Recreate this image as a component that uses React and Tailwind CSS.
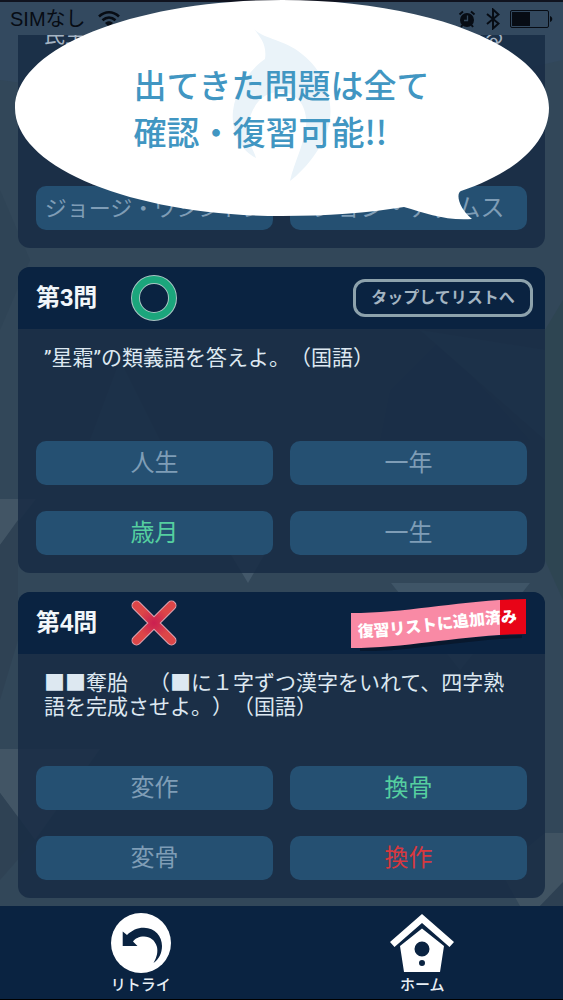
import React from "react";

const questions = [
  {
    id: 3,
    text: "”星霜”の類義語を答えよ。（国語）",
    correct: true,
    added: false,
    answers: [
      { label: "人生" },
      { label: "一年" },
      { label: "歳月", status: "correct" },
      { label: "一生" },
    ],
  },
  {
    id: 4,
    text: "■■奪胎　（■に１字ずつ漢字をいれて、四字熟語を完成させよ。）（国語）",
    correct: false,
    added: true,
    answers: [
      { label: "変作" },
      { label: "換骨", status: "correct" },
      { label: "変骨" },
      { label: "換作", status: "wrong" },
    ],
  },
];

const answerColors = {
  correct: "text-[#55cfa0]",
  wrong: "text-[#d8383f]",
};

const Backdrop = () => (
  <svg
    className="absolute inset-0 h-full w-full"
    viewBox="0 0 563 1000"
    preserveAspectRatio="none"
    aria-hidden="true"
  >
    <path d="M0 0H563V60L300 120L0 80Z" fill="#33495f" />
    <path d="M0 190L30 260L0 330Z" fill="#2f4456" />
    <path d="M545 330L563 300V600L545 560Z" fill="#2e4552" />
    <path d="M0 499H36L0 545Z" fill="#425565" />
    <path d="M0 545L18 520V640L0 700Z" fill="#2f4254" />
    <path d="M225 545H270L248 583Z" fill="#43586a" />
    <path d="M391 583H530L460 670Z" fill="#3f5567" />
    <path d="M0 749H100L35 840L0 793Z" fill="#425565" />
    <path d="M0 793L35 840L0 880Z" fill="#2f4254" />
    <path d="M545 833H563V885L540 906H520L500 870Z" fill="#405362" />
    <path d="M563 882L540 906H563Z" fill="#2d4052" />
    <path d="M120 360L160 440H90Z" fill="#3a5064" />
    <path d="M390 390L440 340L530 440H380Z" fill="#2c4156" />
    <path d="M420 330L545 350V440Z" fill="#3a5064" />
  </svg>
);

const StatusBar = () => (
  <div className="relative flex h-[35px] items-center justify-between border-t-2 border-[#10131f] px-2.5 text-[#070c14]">
    <div className="flex items-center gap-3">
      <span className="text-xl leading-6">SIMなし</span>
      <svg width="22" height="18" viewBox="0 0 22 18" fill="none">
        <path
          d="M1 6.500C7 .8 15 .8 21 6.500M4.500 10.300C8.500 6.600 13.500 6.600 17.500 10.300"
          stroke="currentColor"
          strokeWidth="2.600"
        />
        <path d="M7 13C9.500 10.800 12.500 10.800 15 13L11 17Z" fill="currentColor" />
      </svg>
    </div>
    <div className="flex items-center gap-2.5">
      <svg width="18" height="18" viewBox="0 0 18 18" fill="none">
        <circle cx="9" cy="10" r="7" fill="currentColor" />
        <path
          d="M1.500 4.500L5 1.500M16.500 4.500L13 1.500M4.500 15L3 17M13.500 15L15 17"
          stroke="currentColor"
          strokeWidth="2"
        />
        <path d="M9.500 5.500V10.500H6" stroke="#33485c" strokeWidth="1.300" />
      </svg>
      <svg width="14" height="22" viewBox="0 0 14 22" fill="none">
        <path
          d="M1 6L12.500 15.500L7 20.500V1.500L12.500 6.500L1 16"
          stroke="currentColor"
          strokeWidth="2"
        />
      </svg>
      <svg width="43" height="18" viewBox="0 0 43 18" fill="none">
        <rect x=".5" y=".5" width="38" height="17" rx="1.500" stroke="currentColor" />
        <rect x="2" y="2" width="18" height="14" fill="currentColor" />
        <path d="M40 6C43 7 43 11 40 12Z" fill="currentColor" />
      </svg>
    </div>
  </div>
);

const Answer = ({ label, status, small }) => (
  <button
    type="button"
    className={`h-11 rounded-[10px] bg-[#255072] whitespace-nowrap ${
      small ? "text-[22px]" : "text-2xl"
    } ${answerColors[status] || "text-[#7f9db6]"}`}
  >
    {label}
  </button>
);

const CorrectMark = () => (
  <svg width="46" height="46" viewBox="0 0 46 46" fill="none" role="img" aria-label="正解">
    <circle cx="23" cy="23" r="18.500" stroke="#a9c6c4" strokeWidth="9" />
    <circle cx="23" cy="23" r="18.500" stroke="#1ba67c" strokeWidth="7" />
  </svg>
);

const WrongMark = () => (
  <svg width="46" height="46" viewBox="0 0 46 46" fill="none" role="img" aria-label="不正解">
    <defs>
      <radialGradient id="cross" gradientUnits="userSpaceOnUse" cx="23" cy="23" r="22">
        <stop offset="0" stopColor="#cc1f50" />
        <stop offset="0.300" stopColor="#d02e4e" />
        <stop offset="0.700" stopColor="#dc4648" />
      </radialGradient>
    </defs>
    <path d="M5.500 5.500L40.500 40.500M40.500 5.500L5.500 40.500" stroke="#d9a3b0" strokeWidth="10" strokeLinecap="round" />
    <path d="M5.500 5.500L40.500 40.500M40.500 5.500L5.500 40.500" stroke="url(#cross)" strokeWidth="8" strokeLinecap="round" />
  </svg>
);

const AddedRibbon = () => (
  <svg width="176" height="62" viewBox="0 -6 176 62" className="overflow-visible">
    <defs>
      <clipPath id="ribbon">
        <path d="M1 15C60 15 110 2 176 1V36C110 37 60 50 1 50Z" />
      </clipPath>
      <path id="ribbon-line" d="M8 39C60 38 110 26 174 24" />
    </defs>
    <path d="M10 48C60 48 110 38 172 37V40C110 42 60 54 10 53Z" fill="#07101f" opacity="0.600" />
    <g clipPath="url(#ribbon)">
      <rect width="150" height="51" fill="#f98aa5" />
      <rect x="150" width="26" height="51" fill="#e80417" />
    </g>
    <text className="fill-white text-[16px] font-black">
      <textPath href="#ribbon-line">復習リストに追加済み</textPath>
    </text>
  </svg>
);

const QuestionCard = ({ question }) => (
  <section className="overflow-hidden rounded-xl bg-[#182b44]/85">
    <header className="flex h-[62px] items-center justify-between bg-[#0a2341] pr-3 pl-[18px]">
      <div className="flex items-center gap-[34px]">
        <h2 className="text-2xl font-bold text-[#f1f6fa]">第{question.id}問</h2>
        {question.correct ? <CorrectMark /> : <WrongMark />}
      </div>
      {question.added ? (
        <div className="pr-[7px]">
          <AddedRibbon />
        </div>
      ) : (
        <button
          type="button"
          className="h-[38px] w-[180px] rounded-xl border-[3px] border-[#8da2ac] text-base font-bold text-[#a3b4c1]"
        >
          タップしてリストへ
        </button>
      )}
    </header>
    <p className="min-h-28 px-[26px] pt-[17px] font-['Roboto','Noto_Sans_CJK_JP',sans-serif] text-[21px] leading-6 text-[#dde8f1] [text-spacing-trim:space-all]">
      {question.text}
    </p>
    <div className="grid grid-cols-2 gap-x-[17px] gap-y-[26px] px-[18px] pb-[18px]">
      {question.answers.map((answer) => (
        <Answer key={answer.label} {...answer} />
      ))}
    </div>
  </section>
);

const PreviousCard = () => (
  <section className="flex h-[213px] flex-col justify-end overflow-hidden rounded-b-xl bg-[#182b44]/85">
    <p className="min-h-[163px] px-[26px] text-[21px] leading-6 whitespace-nowrap text-[#a5b4c3]">
      民主共和制のもとで就任した初代大統領とされる
    </p>
    <div className="grid shrink-0 grid-cols-2 gap-x-[17px] px-[18px] pb-[18px]">
      <Answer label="ジョージ・ワシントン" small />
      <Answer label="ジョン・アダムス" />
    </div>
  </section>
);

const SpeechBubble = () => (
  <div className="absolute inset-x-0 top-0">
    <svg className="w-full" viewBox="0 0 563 222" aria-hidden="true">
      <path
        d="M282 0C430 0 549 48 549 108C549 143 515 173 461 191C455 194 460 210 472 219C446 221 425 213 404 207C368 213 326 216 282 216C134 216 15 168 15 108C15 48 134 0 282 0Z"
        fill="#fff"
      />
      <path
        d="M254 29C262 38 281 39 298 51C322 68 333 94 330 119C326 144 307 168 290 181C294 163 303 147 306 127C308 105 296 92 280 92C259 92 251 110 247 127C246 140 254 150 256 158C240 150 231 131 233 111C236 87 251 69 265 59C267 45 261 38 254 29Z"
        fill="#eaf3f9"
      />
    </svg>
    <div className="absolute inset-x-0 top-[61px] flex justify-center">
      <p className="font-['Noto_Sans_CJK_JP',sans-serif] text-[33px] leading-[47px] font-medium text-[#4196c2]">
        出てきた問題は全て
        <br />
        確認・復習可能!!
      </p>
    </div>
  </div>
);

const RetryIcon = () => (
  <svg width="64" height="60" viewBox="-2 0 64 60">
    <circle cx="30" cy="30" r="30" fill="#fff" />
    <path
      d="M11.700 18.500L16 22C21 17 27 14.500 33 14.700C44 15 51 23 51 33C51 40 48 46 42.500 50C46 44 47 39 46 34C44 27 39 23.500 33 23.500C28 23.500 24 25.500 22 28.500L26.500 33H11.700Z"
      fill="#0a2341"
    />
  </svg>
);

const HomeIcon = () => (
  <svg width="64" height="60" viewBox="0 0 64 60" fill="#fff">
    <path d="M32 1L64 29L59.500 34L32 10L4.500 34L0 29Z" />
    <path
      fillRule="evenodd"
      d="M32 15.500L54 33L50 59H14L10 33ZM32 28.500A7.500 7.500 0 1 0 32 43.500A7.500 7.500 0 1 0 32 28.500ZM32 47A3 3 0 1 0 32 53A3 3 0 1 0 32 47Z"
    />
  </svg>
);

const FooterNav = () => (
  <nav className="relative mt-2 grid grow grid-cols-2 border-b border-black bg-[#0a2341]">
    <button type="button" className="flex flex-col items-center pt-[7px] text-[#e8eff5]">
      <RetryIcon />
      <span className="mt-0.5 text-[15px] leading-5 font-medium">リトライ</span>
    </button>
    <button type="button" className="flex flex-col items-center pt-[7px] text-[#e8eff5]">
      <HomeIcon />
      <span className="mt-0.5 text-[15px] leading-5 font-medium">ホーム</span>
    </button>
  </nav>
);

const App = () => {
  return (
    <div
      lang="ja"
      className="relative flex min-h-screen flex-col overflow-hidden bg-[#324759] font-['Liberation_Sans','Noto_Sans_CJK_JP',sans-serif]"
    >
      <Backdrop />
      <StatusBar />
      <main className="relative flex flex-col gap-[19px] px-[18px]">
        <PreviousCard />
        {questions.map((question) => (
          <QuestionCard key={question.id} question={question} />
        ))}
      </main>
      <FooterNav />
      <SpeechBubble />
    </div>
  );
};

export default App;
